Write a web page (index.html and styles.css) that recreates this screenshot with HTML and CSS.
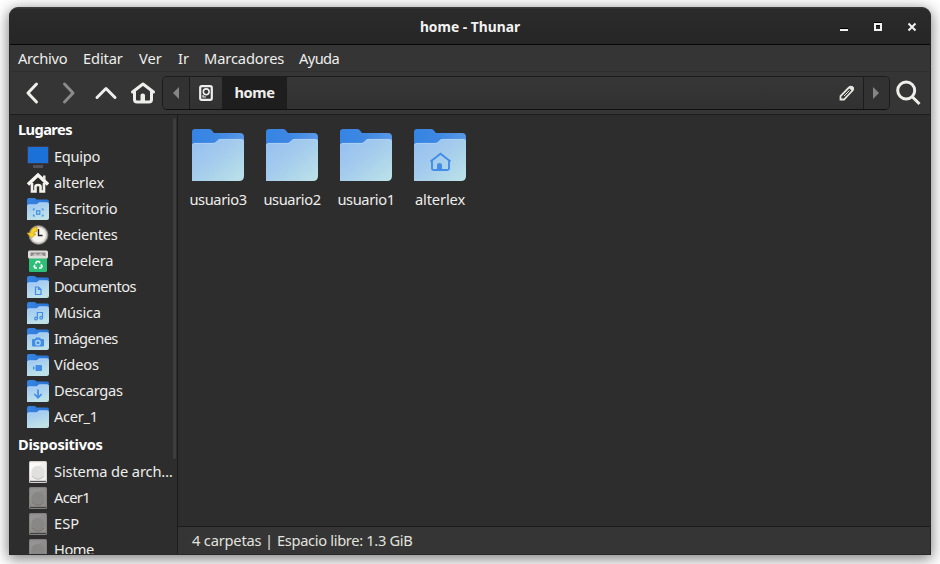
FILE: index.html
```
<!DOCTYPE html>
<html lang="es">
<head>
<meta charset="utf-8">
<title>home - Thunar</title>
<link rel="stylesheet" href="styles.css">
</head>
<body>
<svg class="defs" aria-hidden="true">
  <defs>
    <linearGradient id="back" x1="0" y1="0" x2="1" y2="0"><stop offset="0" stop-color="#3584e4"/><stop offset=".5" stop-color="#3f88e2"/><stop offset="1" stop-color="#5a98e6"/></linearGradient>
    <linearGradient id="front" x1="0" y1="0" x2="1" y2="1"><stop offset=".1" stop-color="#98c1f1"/><stop offset=".5" stop-color="#a6cdec"/><stop offset="1" stop-color="#bce3e8"/></linearGradient>
    <linearGradient id="sback" x1="0" y1="0" x2="1" y2="0"><stop offset="0" stop-color="#3584e4"/><stop offset="1" stop-color="#2b74d0"/></linearGradient>
    <linearGradient id="sfront" x1="0" y1="0" x2=".4" y2="1"><stop offset="0" stop-color="#9ac3f4"/><stop offset="1" stop-color="#bfe2e8"/></linearGradient>
    <symbol id="folder" viewBox="0 0 52 52">
      <path fill="url(#back)" d="M0 24V3Q0 0 3 0H17Q18.500 0 19.500 1L22 4H48Q52 4 52 8V24Z"/>
      <path fill="url(#front)" d="M0 52V17Q0 14 3 14H21.500Q23 14 24 13L26 11Q27 10 28.500 10H49Q52 10 52 13V47Q52 52 47 52Z"/>
      <path fill="none" stroke="#b3d2f5" stroke-width=".8" d="M.5 17Q.5 14.400 3 14.400H22Q23 14.400 24 13.400L26 11.400Q27 10.400 28.500 10.400H49Q51.500 10.400 51.500 13"/>
    </symbol>
    <symbol id="sfolder" viewBox="0 0 22 22">
      <path fill="url(#sback)" d="M0 12V2Q0 0 2 0H7.500Q8.500 0 9.500 1.500H20Q22 1.500 22 3.500V12Z"/>
      <path fill="url(#sfront)" d="M0 22V8.500Q0 6.500 2 6.500H9.500L12 4.500H20.500Q22 4.500 22 6V20Q22 22 20 22Z"/>
      <path fill="none" stroke="#b8d6f8" stroke-width=".8" d="M.5 8.500Q.5 6.900 2 6.900H9.700L12.200 4.900H20.500"/>
    </symbol>
    <symbol id="drive" viewBox="0 0 22 22">
      <rect x="2" y="0" width="18" height="22" rx="1.500" fill="#d5d3cf"/>
      <rect x="3" y="1" width="16" height="18" rx="1" fill="#f0efed"/>
      <path fill="#fff" d="M3 2H15L3 14Z" opacity=".7"/>
      <circle cx="11" cy="11.500" r="6.800" fill="#e2e0dc"/>
      <path fill="none" stroke="#bdbab5" stroke-width=".9" d="M5 15Q11 21.500 17 15"/>
      <path stroke="#55535a" d="M3 20.500H19"/>
    </symbol>
  </defs>
</svg>
<div class="window">
  <header class="titlebar">
    <span class="title">home - Thunar</span>
    <div class="controls">
      <svg width="12" height="12"><path d="M2 7.500H10" stroke="#000"/><path d="M2 9H10" stroke="#f2f2f2" stroke-width="2"/></svg>
      <svg width="12" height="12"><path d="M2 1.500H10M4.500 4.500H7.500" stroke="#000"/><rect x="3" y="3" width="6" height="6" fill="none" stroke="#f2f2f2" stroke-width="2"/></svg>
      <svg width="12" height="12"><path d="M2.500 2.500L9.500 9.500M9.500 2.500L2.500 9.500" stroke="#f2f2f2" stroke-width="2"/></svg>
    </div>
  </header>
  <nav class="menubar"><span class="t2">Archivo</span><span class="t1">Editar</span><span>Ver</span><span>Ir</span><span class="t1">Marcadores</span><span class="t4">Ayuda</span></nav>
  <div class="toolbar">
    <div class="nav">
      <svg width="37" height="34" viewBox="0 0 37 34" class="line"><path d="M26.500 8L18 17L26.500 26"/></svg>
      <svg width="37" height="34" viewBox="0 0 37 34" class="line dim"><path d="M17.500 8L26 17L17.500 26"/></svg>
      <svg width="37" height="34" viewBox="0 0 37 34" class="line"><path d="M13 21.500L22 12.500L31 21.500"/></svg>
      <svg width="37" height="34" viewBox="0 0 37 34" class="line"><path d="M11.500 16L22 8L32.500 16M13.500 15V23.500Q13.500 26 16 26H28Q30.500 26 30.500 23.500V15"/><path class="solid" d="M19.500 27V19.500Q19.500 17.500 21.500 17.500H22Q24 17.500 24 19.500V27Z"/></svg>
    </div>
    <div class="pathbar">
      <div class="arrow"><svg width="6" height="12"><path d="M6 0V12L0 6Z" fill="#858585"/></svg></div>
      <div class="disk"><svg width="14" height="16"><rect x="1.200" y="1.200" width="11.600" height="13.600" rx="1.600" fill="none" stroke="#eee" stroke-width="2.200"/><circle cx="7.200" cy="6.800" r="2.900" fill="none" stroke="#eee" stroke-width="1.600"/><path d="M4 10V12H7" fill="none" stroke="#eee" stroke-width="1.200"/></svg></div>
      <div class="crumb">home</div>
      <div class="rest"><svg width="16" height="16" viewBox="0 0 16 16"><path d="M1.500 14.500V11L10 2.500Q11.500 1 13 2Q15 3.500 13.500 5.500L5 14.500Z" fill="none" stroke="#e6e6e0" stroke-width="1.800"/><path d="M9.500 2.500L13.500 6.500L15 4Q15 1 12 1Z" fill="#e6e6e0"/><path d="M5 11L10.500 5.500" stroke="#e6e6e0"/></svg></div>
      <div class="arrow end"><svg width="6" height="12"><path d="M0 0V12L6 6Z" fill="#858585"/></svg></div>
    </div>
    <svg class="search" width="26" height="26" viewBox="0 0 26 26"><circle cx="10.200" cy="10.500" r="8.500"/><path d="M16.500 17L23.500 24"/></svg>
  </div>
  <div class="body">
    <aside class="sidebar">
      <div class="head">Lugares</div>
      <div class="place"><svg width="22" height="22"><rect x=".5" y=".5" width="21" height="17" rx="1" fill="#1c71d8" stroke="#3d3846"/><path d="M6 19H16V22H6Z" fill="#54515c"/></svg><span class="t2">Equipo</span></div>
      <div class="place"><svg width="22" height="22"><path d="M4 11V20H18V11L11 4.500Z" fill="#2b2b28"/><path d="M5 11V19.500H8.500V14.500Q8.500 13 11 13T13.500 14.500V19.500H17V11" fill="none" stroke="#f2f1ec" stroke-width="2.600"/><path d="M1 12.500L11 3L21 12.500" fill="none" stroke="#f6f5f0" stroke-width="3.400"/><path d="M16 3.500H18.500V9L16 7Z" fill="#e8e7e0"/></svg><span class="t1">alterlex</span></div>
      <div class="place"><svg width="22" height="22"><use href="#sfolder"/><path d="M6.500 12.500V11H8M14.500 11H16V12.500M6.500 16.500V18H8M14.500 18H16V16.500" class="glyph"/><rect x="9.600" y="12.800" width="3.200" height="3.400" class="glyph"/></svg><span class="t1">Escritorio</span></div>
      <div class="place"><svg width="22" height="22"><circle cx="11.500" cy="11" r="10" fill="#77756f"/><circle cx="11.500" cy="11" r="9" fill="#cfcdc5"/><circle cx="11.500" cy="11" r="7.300" fill="#f4f3ef"/><path d="M11.500 5V11.500H15.500" fill="none" stroke="#222" stroke-width="1.400"/><path d="M10 3Q4 3 3.500 9H0L4.500 14L9 10H6.500Q7 7 10 7.500Z" fill="#f6d32d" stroke="#c79a10" stroke-width=".7"/></svg><span class="t2">Recientes</span></div>
      <div class="place"><svg width="22" height="22"><path d="M2 6H20V20.500Q20 22 18.500 22H3.500Q2 22 2 20.500Z" fill="#2dbf78"/><rect x="1" y=".5" width="20" height="8" rx="1.500" fill="#dedbd8"/><rect x="3.500" y="2.500" width="15" height="3.500" fill="#8c8989"/><path d="M5 6L8 3L11 5L14 3L17 6Z" fill="#c4c1c0"/><g fill="none" stroke="#fff" stroke-width="1.700"><path d="M8.500 13.500L10 11.500H12L13 13"/><path d="M14 14.500L15 16.500L14 18H12"/><path d="M10 18H8L7.200 16.500L8 15"/></g></svg><span class="t1">Papelera</span></div>
      <div class="place"><svg width="22" height="22"><use href="#sfolder"/><path d="M8.500 11H11.500L14 13.500V18.500H8.500ZM11.500 11V13.500H14" class="glyph"/></svg><span class="t4">Documentos</span></div>
      <div class="place"><svg width="22" height="22"><use href="#sfolder"/><path d="M10.300 16.500V10.500H15.500V15.500" class="glyph"/><circle cx="9" cy="16.500" r="1.400" class="glyph"/><circle cx="14.200" cy="15.700" r="1.400" class="glyph"/></svg><span class="t2">Música</span></div>
      <div class="place"><svg width="22" height="22"><use href="#sfolder"/><path d="M6 11H8L9 9.500H13L14 11H16Q17 11 17 12V17.500Q17 18.500 16 18.500H6Q5 18.500 5 17.500V12Q5 11 6 11Z" fill="#438de6"/><circle cx="11" cy="14.700" r="2.200" fill="none" stroke="#b0d5ee" stroke-width="1.300"/></svg><span class="t4">Imágenes</span></div>
      <div class="place"><svg width="22" height="22"><use href="#sfolder"/><path d="M9 11H14Q15 11 15 12V16Q15 17 14 17H9Q8.500 17 8.500 16V12Q8.500 11 9 11ZM6 12L8 14L6 16Z" fill="#438de6"/></svg><span class="t1">Vídeos</span></div>
      <div class="place"><svg width="22" height="22"><use href="#sfolder"/><path d="M11 9.500V17.500M7.300 14L11 17.700L14.700 14" fill="none" stroke="#438de6" stroke-width="1.700"/></svg><span class="t2">Descargas</span></div>
      <div class="place"><svg width="22" height="22"><use href="#sfolder"/></svg><span class="t2">Acer_1</span></div>
      <div class="head t2">Dispositivos</div>
      <div class="place"><svg width="22" height="22"><use href="#drive"/></svg><span class="t1">Sistema de arch…</span></div>
      <div class="place off"><svg width="22" height="22"><use href="#drive"/></svg><span class="t4">Acer1</span></div>
      <div class="place off"><svg width="22" height="22"><use href="#drive"/></svg><span>ESP</span></div>
      <div class="place off"><svg width="22" height="22"><use href="#drive"/></svg><span class="t3">Home</span></div>
      <div class="scroll"></div>
    </aside>
    <main class="main">
      <div class="files">
        <div class="file"><svg width="52" height="52"><use href="#folder"/></svg><span>usuario3</span></div>
        <div class="file"><svg width="52" height="52"><use href="#folder"/></svg><span>usuario2</span></div>
        <div class="file"><svg width="52" height="52"><use href="#folder"/></svg><span>usuario1</span></div>
        <div class="file"><svg width="52" height="52"><use href="#folder"/><path d="M16.500 32.500L26.500 24.800L36.500 32.500M18 31.500V39.500Q18 41 19.500 41H33.500Q35 41 35 39.500V31.500" fill="none" stroke="#438de6" stroke-width="1.900"/><path d="M23 41V36Q23 34 25.500 34T28 36V41Z" fill="#438de6"/></svg><span class="t1">alterlex</span></div>
      </div>
      <footer class="status"><span>4 carpetas</span><span>|</span><span class="free">Espacio libre: 1.3 GiB</span></footer>
    </main>
  </div>
</div>
</body>
</html>
```
FILE: styles.css
```
* { box-sizing: border-box; }
body { margin: 0; width: 940px; height: 564px; overflow: hidden; padding: 7px 9px 9px; background: #fff; font: 14.67px/20px "Noto Sans", sans-serif; color: #eeeeec; }
svg { display: block; flex: none; }
.defs { position: absolute; width: 0; height: 0; }
.window { width: 922px; height: 548px; display: flex; flex-direction: column; border: 1px solid #292929; border-top-color: #3b3b3b; border-radius: 9px 9px 0 0; overflow: hidden; background: #353535; box-shadow: 0 3px 14px 1px rgba(0,0,0,.5); }
.titlebar { height: 37px; flex: none; border-top: 1px solid #333; border-bottom: 1px solid #070707; background: linear-gradient(#2b2b2b, #262626); display: grid; grid-template-columns: 1fr auto 1fr; align-items: center; }
.title { grid-column: 2; font-weight: 700; font-size: 13.8px; color: #f2f2f2; }
.controls { display: flex; justify-content: flex-end; gap: 22px; padding-right: 12px; }
.menubar { height: 27px; flex: none; border-bottom: 1px solid #2f2f2f; display: grid; grid-template-columns: 65px 56px 39px 26px 95px 60px; padding: 3px 8px 0; }
.toolbar { height: 43px; flex: none; border-bottom: 1px solid #1d1d1d; display: flex; align-items: center; }
.nav { display: flex; width: 152px; }
.line { fill: none; stroke: #eeeeec; stroke-width: 3; stroke-linecap: round; stroke-linejoin: round; }
.dim { stroke: #8a8a8a; }
.line .solid { fill: #eeeeec; stroke: none; }
.pathbar { display: flex; width: 728px; height: 34px; border: 1px solid #1c1c1c; border-bottom-color: #101010; border-radius: 5px; background: linear-gradient(#373737, #313131); overflow: hidden; }
.pathbar > div { display: flex; align-items: center; justify-content: center; }
.arrow { width: 27px; border-right: 1px solid #1c1c1c; background: #323232; }
.pathbar .disk { width: 32px; }
.pathbar .crumb { width: 65px; padding-bottom: 2px; background: #1e1e1e; font-weight: 700; letter-spacing: -.4px; }
.pathbar .rest { flex: 1; justify-content: flex-end; padding-right: 8px; }
.arrow.end { width: 26px; border-right: 0; border-left: 1px solid #1c1c1c; padding-right: 2px; }
.search { margin-left: 6px; fill: none; stroke: #eeeeec; stroke-width: 3; }
.body { flex: 1; min-height: 0; display: flex; background: #2d2d2d; }
.sidebar { width: 168px; flex: none; border-right: 1px solid #1b1b1b; overflow: hidden; position: relative; }
.head { height: 29px; padding: 4px 8px; font-weight: 700; color: #fff; letter-spacing: -.6px; }
.place { height: 26px; display: flex; align-items: center; gap: 5px; padding-left: 17px; white-space: nowrap; }
.place span { padding-bottom: 2px; }
.off svg { opacity: .5; }
.glyph { fill: none; stroke: #438de6; stroke-width: 1.2; }
.scroll { position: absolute; right: 1px; top: 3px; width: 3px; height: 341px; border-radius: 2px; background: #3d3d3d; }
.main { flex: 1; display: flex; flex-direction: column; }
.files { flex: 1; display: flex; padding: 14px 3px; }
.file { width: 74px; display: flex; flex-direction: column; align-items: center; gap: 8px; letter-spacing: -.4px; }
.status { height: 28px; border-top: 1px solid #1b1b1b; background: #353535; padding: 3px 14px; color: #e2e2df; display: grid; grid-template-columns: 73px 12px auto; letter-spacing: -.2px; }
.free { letter-spacing: -.33px; }
.t1 { letter-spacing: -.13px; }
.t2 { letter-spacing: -.3px; }
.t3 { letter-spacing: -.45px; }
.t4 { letter-spacing: -.6px; }
```
